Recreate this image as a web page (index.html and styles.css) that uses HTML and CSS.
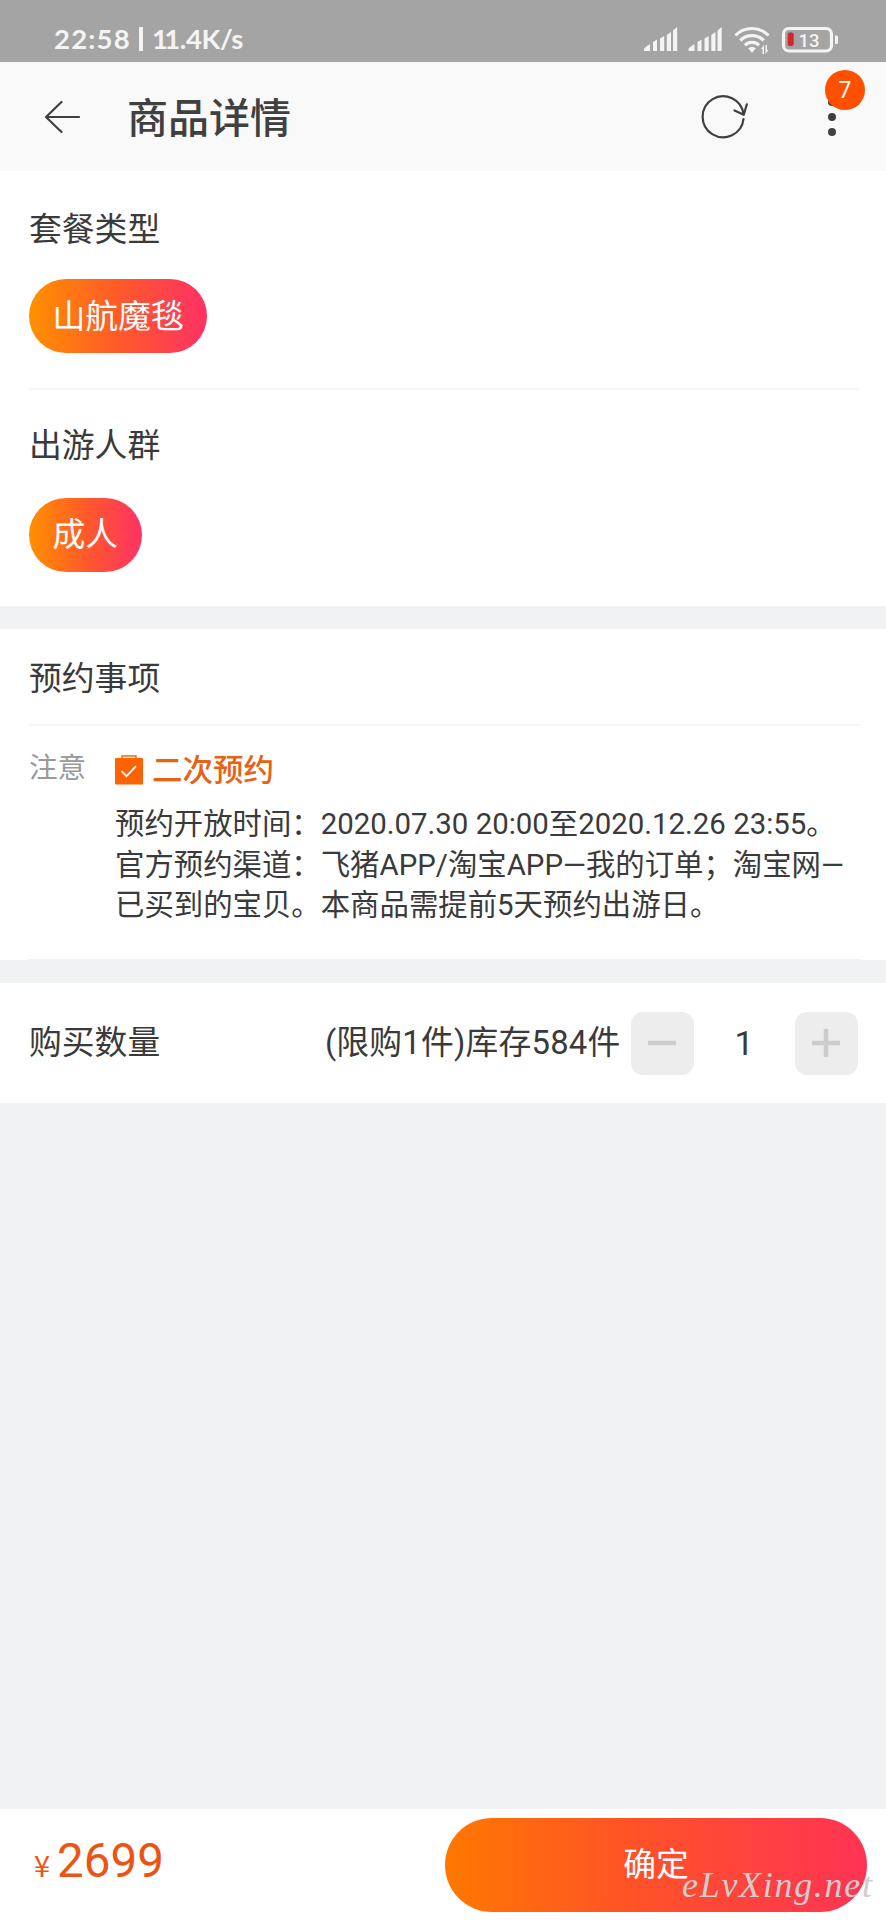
FILE: index.html
```html
<!DOCTYPE html>
<html lang="zh-CN">
<head>
<meta charset="utf-8">
<title>商品详情</title>
<link rel="stylesheet" href="styles.css">
</head>
<body>
<div class="page">
  <div class="status">
    <div class="status-left"><span class="clock">22:58</span><span class="bar"></span><span class="speed"><span class="ones">11</span>.4K/s</span></div>
    <svg class="status-icons" width="196" height="30" viewBox="0 0 196 30">
      <g fill="#f4f4f4">
        <path id="signal" d="M1 25v-2q0-1 6-5v7zM10 25v-9l4-2.500v11.500zM17 25v-12.500l4.200-2.500v15zM23.800 25v-16l4.200-3v19zM30 25v-20.500l4.200-3.500v24z"/>
        <use href="#signal" x="44.500"/>
      </g>
      <g fill="none" stroke="#f4f4f4" stroke-width="3.200">
        <path d="M92.500 9.500a23 23 0 0 1 33 0"/>
        <path d="M97.300 14.500a16.500 16.500 0 0 1 23.400 0"/>
        <path d="M102 19.300a10 10 0 0 1 14 0"/>
      </g>
      <path fill="#f4f4f4" d="M105.200 22.300q3.800-3 7.600 0l-3.800 4.500zM118 23l3-4v9h-1.500v-5zM122.500 19h1.500v5h1.500l-3 4z"/>
      <rect x="140.500" y="2.500" width="48" height="22.500" rx="5.500" fill="none" stroke="#f4f4f4" stroke-width="3.200"/>
      <rect x="144.700" y="6.500" width="6" height="13.500" rx="2" fill="#d5242c"/>
      <path fill="#f4f4f4" d="M192 9.500h1.500q1.500 0 1.500 1.500v5.500q0 1.500-1.500 1.500H192z"/>
      <text class="battery" x="155.500" y="20.500">13</text>
    </svg>
  </div>

  <header class="header">
    <svg class="back" width="36" height="34" viewBox="0 0 36 34"><path d="M17.500 2L2 17l15.500 15M2 17h33"/></svg>
    <h1 class="title">商品详情</h1>
    <svg class="refresh" width="50" height="46" viewBox="0 0 50 46"><path d="M43.500 20.500A20.500 20.500 0 1 0 43.500 25M34.500 16.500l9.300 4.300 3-10.500"/></svg>
    <div class="more"><i></i><i></i><i></i><span class="badge">7</span></div>
  </header>

  <section class="options">
    <div class="group">
      <h2 class="label">套餐类型</h2>
      <span class="pill">山航魔毯</span>
    </div>
    <div class="group">
      <h2 class="label">出游人群</h2>
      <span class="pill">成人</span>
    </div>
  </section>

  <section class="booking">
    <h2 class="label booking-title">预约事项</h2>
    <div class="notice">
      <span class="notice-key">注意</span>
      <div class="notice-body">
        <div class="notice-head">
          <svg width="28" height="30" viewBox="0 0 28 30"><path fill="none" stroke="#ff6200" stroke-width="1.500" d="M7 4V1h14v3"/><rect y="3" width="28" height="26.500" rx="1" fill="#ff6200"/><path fill="none" stroke="#fff" stroke-width="1.800" d="M6.500 16l5 5.200 9.500-10"/></svg>
          <span>二次预约</span>
        </div>
        <p class="notice-text">预约开放时间：2020.07.30 20:00至2020.12.26 23:55。<br>官方预约渠道：飞猪APP/淘宝APP—我的订单；淘宝网—<br>已买到的宝贝。本商品需提前5天预约出游日。</p>
      </div>
    </div>
  </section>

  <section class="quantity">
    <h2 class="label">购买数量</h2>
    <span class="stock">(限购1件)库存584件</span>
    <span class="step"><svg width="28" height="28" viewBox="0 0 28 28"><path d="M0 14h28"/></svg></span>
    <span class="count">1</span>
    <span class="step"><svg width="28" height="28" viewBox="0 0 28 28"><path d="M0 14h28M14 0v28"/></svg></span>
  </section>

  <footer class="footer">
    <div class="price"><span class="yen">¥</span><span class="amount">2699</span></div>
    <div class="confirm">确定</div>
    <span class="watermark">eLvXing.net</span>
  </footer>
</div>
</body>
</html>
```
FILE: styles.css
```css
* { box-sizing: border-box; }
body { margin: 0; }
.page {
  width: 886px;
  height: 1920px;
  display: flex;
  flex-direction: column;
  overflow: hidden;
  background: #f1f2f4;
  color: #3a3a3a;
  font-family: Roboto, "Noto Sans CJK SC", sans-serif;
}
h1, h2, p { margin: 0; font-weight: 400; }
svg { display: block; flex: none; }

.status {
  height: 62px;
  flex: none;
  padding: 25px 47px 0 54px;
  display: flex;
  justify-content: space-between;
  align-items: flex-start;
  background: #a4a4a4;
  color: #f4f4f4;
}
.status-icons { margin-top: 1px; }
.status-left {
  display: flex;
  align-items: center;
  height: 28px;
  font: 700 27.5px/28px Lato, sans-serif;
}
.clock { letter-spacing: 1.2px; }
.speed { letter-spacing: -0.4px; }
.bar { width: 3.5px; height: 24px; margin: 0 9px 0 8.5px; background: #f4f4f4; }
.ones { letter-spacing: -3.5px; margin-right: 3px; }
.battery { font: 500 18.5px Roboto, sans-serif; fill: #f4f4f4; }

.header {
  height: 109px;
  flex: none;
  display: flex;
  align-items: center;
  padding-left: 44px;
  background: #f9f9f9;
}
.back, .refresh { fill: none; stroke: #404040; stroke-width: 2.2; stroke-linecap: round; stroke-linejoin: round; }
.title { margin-left: 47px; padding-top: 4px; font-size: 41px; line-height: 60px; font-weight: 500; color: #404040; }
.refresh { margin-left: auto; }
.more {
  position: relative;
  display: flex;
  flex-direction: column;
  gap: 7px;
  margin: 0 50px 0 78px;
}
.more i { width: 8px; height: 8px; border-radius: 50%; background: #404040; }
.badge {
  position: absolute;
  left: -3px;
  top: -28px;
  width: 40px;
  height: 40px;
  border-radius: 50%;
  background: #ff5000;
  color: #fff;
  font-size: 23px;
  line-height: 42px;
  text-align: center;
}

.label { font-size: 32.8px; line-height: 48px; }
.options { height: 435px; flex: none; padding: 0 27px 0 29px; background: #fff; }
.group { height: 219px; padding-top: 35px; border-bottom: 2px solid #f6f6f6; }
.group + .group { height: 216px; padding-top: 32px; border: 0; }
.pill {
  display: inline-block;
  height: 74px;
  margin-top: 25px;
  padding: 0 23.5px;
  border-radius: 37px;
  background: linear-gradient(90deg, #ff9000, #ff5a2a 50%, #ff3560 95%);
  color: #fff;
  font-size: 32.8px;
  line-height: 77px;
}
.group + .group .pill { margin-top: 28px; line-height: 74px; }

.booking { height: 331px; flex: none; margin-top: 23px; padding: 0 25px 0 29px; background: #fff; }
.booking-title { height: 97px; padding-top: 26px; border-bottom: 2px solid #f7f7f7; }
.notice { display: flex; height: 234px; padding-top: 22px; border-bottom: 1px solid #f1f2f4; }
.notice-key { width: 86px; flex: none; font-size: 28.6px; line-height: 40px; color: #999; }
.notice-head {
  display: flex;
  align-items: center;
  gap: 9px;
  height: 44px;
  font-size: 30.5px;
  line-height: 44px;
  font-weight: 500;
  color: #e96112;
}
.notice-head span { padding-top: 2px; }
.notice-text { margin-top: 12px; font-size: 29.4px; line-height: 40.6px; white-space: nowrap; }

.quantity {
  height: 120px;
  flex: none;
  display: flex;
  align-items: center;
  margin-top: 23px;
  padding: 0 28.5px 0 29px;
  background: #fff;
}
.stock { margin-left: auto; margin-right: 10px; font-size: 32.8px; line-height: 48px; letter-spacing: 0.2px; white-space: nowrap; }
.step { width: 63px; height: 63px; border-radius: 12px; display: grid; place-items: center; background: #ededed; }
.step svg { fill: none; stroke: #ccc; stroke-width: 4.5; }
.count { width: 101px; text-align: center; font-size: 34px; }

.footer {
  position: relative;
  height: 111px;
  flex: none;
  display: flex;
  align-items: center;
  justify-content: space-between;
  margin-top: auto;
  padding: 0 19px 0 34px;
  background: #fff;
}
.price { display: flex; align-items: baseline; gap: 7px; padding-bottom: 8px; color: #ea5514; }
.yen { font-family: "Noto Sans CJK SC", sans-serif; font-size: 29px; }
.amount { font-size: 47.5px; }
.confirm {
  width: 422px;
  height: 94px;
  border-radius: 47px;
  background: linear-gradient(90deg, #ff7800, #ff5228 45%, #ff3355);
  color: #fff;
  font-size: 32.8px;
  line-height: 94px;
  text-align: center;
}
.watermark {
  position: absolute;
  left: 682px;
  top: 56px;
  font: italic 36px/40px "Liberation Serif", serif;
  letter-spacing: 1.7px;
  color: #d2cccd;
}
```
